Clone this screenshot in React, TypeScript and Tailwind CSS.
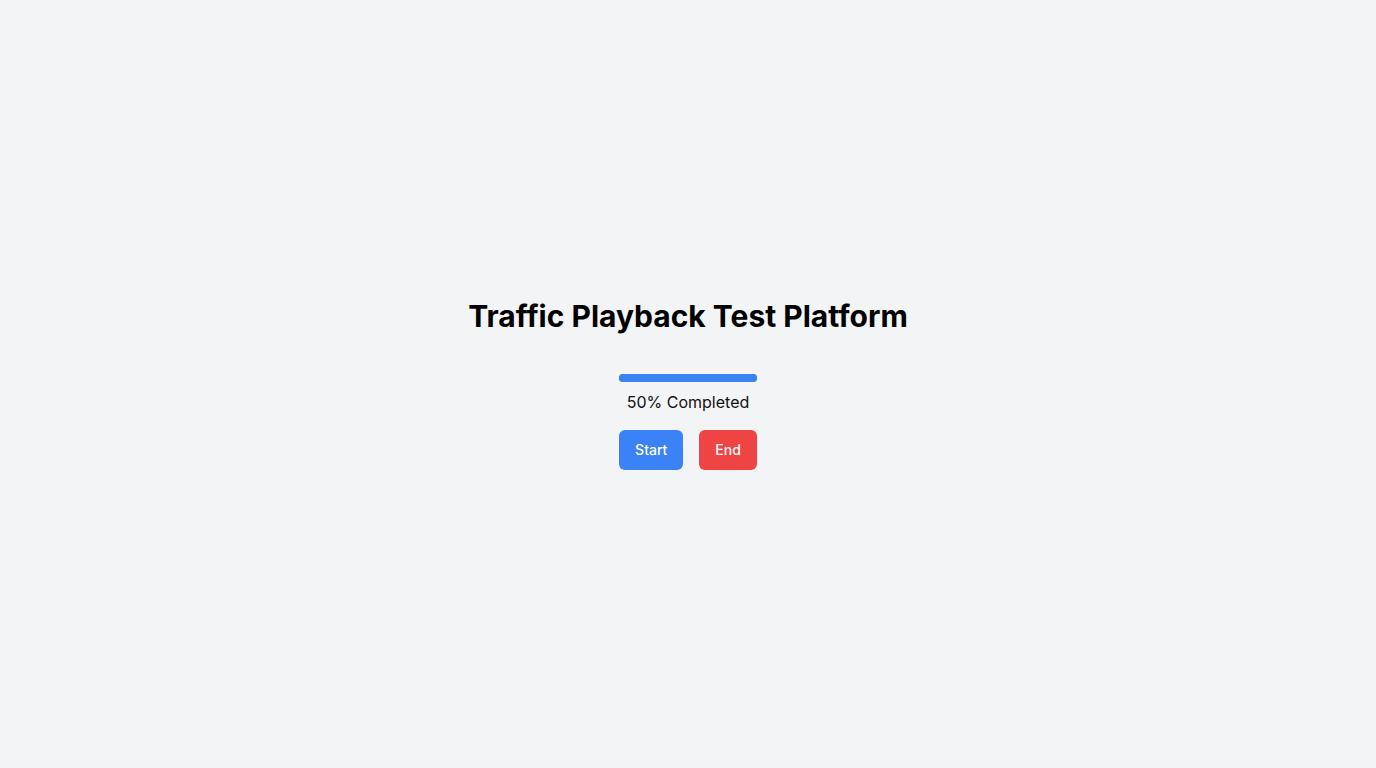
export default function App() {
  return (
    <div className="min-h-screen bg-[#f3f4f6] flex flex-col items-center justify-center font-['Inter',sans-serif]">
      <h1 className="text-[30px] leading-9 font-bold text-black">
        Traffic Playback Test Platform
      </h1>

      <div className="mt-10 flex flex-col items-center">
        <div className="w-[138px] h-2 rounded-full bg-[#3b82f6]">
          <div className="h-2 w-full rounded-full bg-[#3b82f6]" />
        </div>
        <p className="mt-2 text-base leading-6 text-[#111]">50% Completed</p>

        <div className="mt-4 flex gap-4">
          <button className="px-4 h-10 rounded-md bg-[#3b82f6] text-white text-sm font-medium">
            Start
          </button>
          <button className="px-4 h-10 rounded-md bg-[#ef4444] text-white text-sm font-medium">
            End
          </button>
        </div>
      </div>
    </div>
  );
}
